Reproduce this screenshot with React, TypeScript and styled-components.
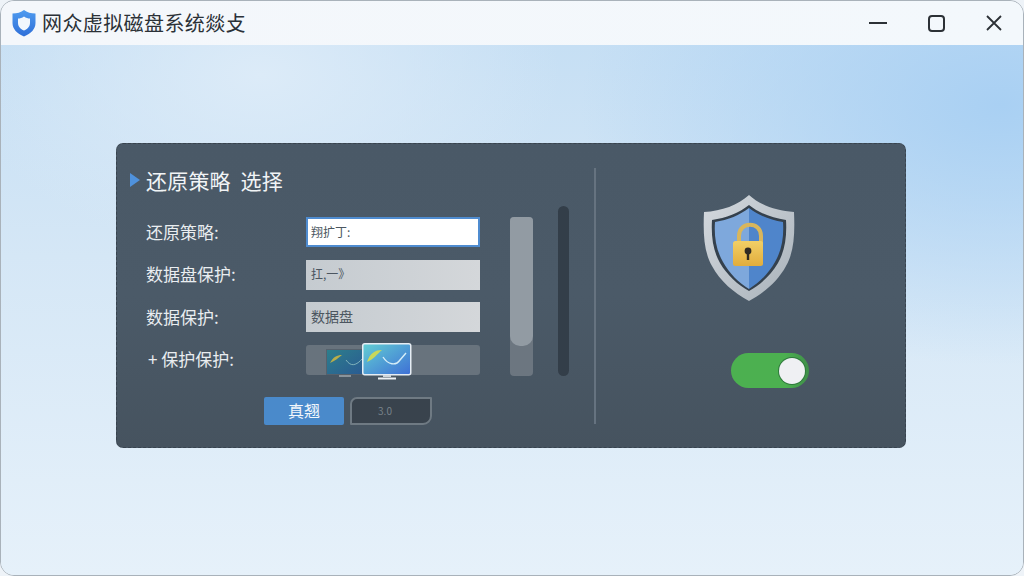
import React from 'react'
import styled, { createGlobalStyle } from 'styled-components'

const fontStack = `"Noto Sans CJK SC", "Noto Sans", sans-serif`

const GlobalStyle = createGlobalStyle`
    html, body {
        margin: 0;
        padding: 0;
        background: #eef3f8;
        font-family: ${fontStack};
    }
`

const Window = styled.div`
    width: 1024px;
    height: 576px;
    display: flex;
    flex-direction: column;
    box-sizing: border-box;
    border: 1px solid #a9b2ba;
    border-radius: 14px;
    overflow: hidden;
`

const TitleBar = styled.header`
    height: 44px;
    flex: none;
    display: flex;
    align-items: center;
    padding-left: 10px;
    background: linear-gradient(90deg, #f4f7fb, #f3f8fc);
`

const AppTitle = styled.h1`
    margin: 0 0 2px 5px;
    font-size: 20px;
    font-weight: 400;
    letter-spacing: 0.4px;
    color: #2b3137;
`

const WindowControls = styled.div`
    margin-left: auto;
    display: flex;
    align-items: center;
`

const ControlButton = styled.div`
    width: 58px;
    height: 44px;
    display: flex;
    align-items: center;
    justify-content: center;
    color: #2c3136;
`

const Desktop = styled.main`
    flex: 1;
    padding: 98px 117px 0 115px;
    background:
        radial-gradient(ellipse 420px 260px at 1000px 60px, #a9d0f3 0%, rgba(169, 208, 243, 0) 100%),
        radial-gradient(ellipse 300px 180px at 260px 30px, #dcebf8 0%, rgba(220, 235, 248, 0) 100%),
        linear-gradient(180deg, #c6dff4 0%, #d5e7f6 40%, #e6f1fa 100%);
`

const Panel = styled.section`
    height: 305px;
    box-sizing: border-box;
    display: flex;
    padding: 24px 0 23px;
    border: 1px dashed #38434e;
    border-radius: 7px;
    background: linear-gradient(180deg, #4a5967 0%, #4b5a68 50%, #46535f 100%);
`

const LeftPane = styled.div`
    width: 479px;
    flex: none;
    box-sizing: border-box;
    padding-left: 13px;
    border-right: 2px solid #667380;
`

const PaneHeading = styled.h2`
    margin: 0;
    height: 24px;
    box-sizing: border-box;
    padding-bottom: 1px;
    display: flex;
    align-items: center;
    font-size: 21px;
    line-height: 22px;
    font-weight: 400;
    letter-spacing: 0.2px;
    color: #f1f4f6;
    white-space: pre;
`

const HeadingMarker = styled.span`
    width: 0;
    height: 0;
    margin-right: 6px;
    border-left: 10px solid #4f92dd;
    border-top: 7px solid transparent;
    border-bottom: 7px solid transparent;
`

const PaneBody = styled.div`
    display: flex;
    margin: 14px 0 0 16px;
`

const Form = styled.div`
    width: 334px;
    flex: none;
    padding-top: 11px;
`

const FormRow = styled.div`
    height: 30px;
    margin-bottom: 12.5px;
    display: grid;
    grid-template-columns: 160px 174px;
    align-items: center;
`

const Label = styled.label<{ $indent?: boolean }>`
    font-size: 17px;
    font-weight: 400;
    line-height: 24px;
    color: #e9edf0;
    padding: 0 0 1px ${(props) => (props.$indent ? '2px' : '0')};
    white-space: pre;
`

const Field = styled.div<{ $focused?: boolean; $small?: boolean }>`
    height: 30px;
    box-sizing: border-box;
    display: flex;
    align-items: center;
    padding: 0 0 2px ${(props) => (props.$focused ? '3px' : '5px')};
    font-size: ${(props) => (props.$small ? '12px' : '14px')};
    color: #4c5660;
    background: ${(props) => (props.$focused ? '#ffffff' : 'linear-gradient(90deg, #c5cbd0, #d4d7da)')};
    border: ${(props) => (props.$focused ? '2px solid #4f8cd0' : 'none')};
`

const PreviewField = styled.div`
    position: relative;
    height: 30px;
    border-radius: 3px;
    background: #68737d;
`

const MonitorDim = styled.svg`
    position: absolute;
    left: 20px;
    top: 4px;
`

const MonitorLit = styled.svg`
    position: absolute;
    left: 56px;
    top: -2px;
`

const Actions = styled.div`
    display: flex;
    gap: 6px;
    margin: 22px 0 0 118px;
`

const PrimaryButton = styled.button`
    width: 80px;
    height: 28px;
    padding: 0 0 2px;
    border: none;
    border-radius: 2px;
    background: #4a8acb;
    color: #f3f7fb;
    font-family: ${fontStack};
    font-size: 16px;
`

const GhostButton = styled.button`
    width: 82px;
    height: 28px;
    padding: 0 12px 0 0;
    box-sizing: border-box;
    border: 2px solid #6f7a83;
    border-radius: 7px 1px 9px 1px;
    background: #39434d;
    color: #78828a;
    font-family: ${fontStack};
    font-size: 10px;
`

const ScrollTrack = styled.div`
    width: 23px;
    height: 159px;
    flex: none;
    margin: 11px 0 0 30px;
    border-radius: 4px;
    background: #6c7680;
`

const ScrollThumb = styled.div`
    height: 129px;
    border-radius: 4px 4px 10px 10px;
    background: #929ba3;
`

const DarkRail = styled.div`
    width: 11px;
    height: 170px;
    flex: none;
    margin-left: 25px;
    border-radius: 6px;
    background: #333e49;
`

const RightPane = styled.div`
    flex: 1;
    display: flex;
    flex-direction: column;
    padding: 26px 0 0 106px;
`

const ShieldArt = styled.svg`
    display: block;
`

const Toggle = styled.div`
    width: 78px;
    height: 35px;
    margin: 51px 0 0 29px;
    box-sizing: border-box;
    display: flex;
    align-items: center;
    justify-content: flex-end;
    padding-right: 4px;
    border-radius: 17.5px;
    background: linear-gradient(90deg, #4cb050 0%, #4cb050 70%, #3f8f49 100%);
`

const ToggleKnob = styled.span`
    width: 26px;
    height: 26px;
    border-radius: 50%;
    background: #eff0f3;
    box-shadow: 0 0 0 1px #2f7a3c;
`

const Logo = () => (
    <svg width="26" height="28" viewBox="0 0 26 28">
        <defs>
            <linearGradient id="logoFill" x1="0" y1="0" x2="0" y2="1">
                <stop offset="0" stopColor="#4f9bef" />
                <stop offset="1" stopColor="#2f6fd8" />
            </linearGradient>
        </defs>
        <path d="M13 1 C16 3.5 20 4.5 24.5 4.5 L24.5 14 C24.5 20 20 24.5 13 27.5 C6 24.5 1.5 20 1.5 14 L1.5 4.5 C6 4.5 10 3.5 13 1 Z" fill="url(#logoFill)" />
        <path d="M13 7.5 C15 9 17 9.5 19 9.5 L19 14 C19 17.5 16.5 20 13 21.5 C9.5 20 7 17.5 7 14 L7 9.5 C9 9.5 11 9 13 7.5 Z" fill="#f2f7fd" />
    </svg>
)

const Shield = () => (
    <ShieldArt width="94" height="108" viewBox="0 0 94 108">
        <defs>
            <linearGradient id="rim" x1="0" y1="0" x2="1" y2="1">
                <stop offset="0" stopColor="#d4d9de" />
                <stop offset="1" stopColor="#a9b2ba" />
            </linearGradient>
            <linearGradient id="lockBody" x1="0" y1="0" x2="0" y2="1">
                <stop offset="0" stopColor="#f1cf66" />
                <stop offset="1" stopColor="#e2ad3d" />
            </linearGradient>
        </defs>
        <path d="M47 1 C58 11 74 17 92 18 C93 40 92 58 84 72 C76 87 62 99 47 107 C32 99 18 87 10 72 C2 58 1 40 2 18 C20 17 36 11 47 1 Z" fill="url(#rim)" />
        <path d="M47 11 C57 19 70 24 84 26 C85 42 83 57 76 69 C69 81 58 91 47 97 C36 91 25 81 18 69 C11 57 9 42 10 26 C24 24 37 19 47 11 Z" fill="#35414d" />
        <path d="M47 14 L47 95 C37 89 27 79 21 68 C14 56 12 42 13 28 C26 26 38 21 47 14 Z" fill="#7ea8dc" />
        <path d="M47 14 C56 21 68 26 81 28 C82 42 80 56 73 68 C67 79 57 89 47 95 Z" fill="#4f85cb" />
        <path d="M37 49 L37 42 C37 27 59 27 59 42 L59 49" fill="none" stroke="#d9b65c" strokeWidth="4" />
        <rect x="31" y="47" width="30" height="25" rx="2.5" fill="url(#lockBody)" />
        <circle cx="46" cy="57" r="3.4" fill="#2f2a22" />
        <rect x="44.8" y="58" width="2.4" height="8" fill="#2f2a22" />
    </ShieldArt>
)

const Monitors = () => (
    <>
        <MonitorDim width="38" height="30" viewBox="0 0 38 30">
            <defs>
                <linearGradient id="screenDim" x1="0" y1="0" x2="1" y2="1">
                    <stop offset="0" stopColor="#2d7f8c" />
                    <stop offset="1" stopColor="#2a5a92" />
                </linearGradient>
            </defs>
            <rect x="0.5" y="0.5" width="37" height="25" fill="url(#screenDim)" stroke="#56616c" />
            <path d="M4 14 C7 8 11 6 16 6 C12 9 9 12 4 14 Z" fill="#b8ae4a" />
            <path d="M20 11 C25 18 30 17 37 9" fill="none" stroke="#7fb2bb" strokeWidth="1" />
            <rect x="13" y="26" width="12" height="2" fill="#8a939b" />
        </MonitorDim>
        <MonitorLit width="50" height="37" viewBox="0 0 50 37">
            <defs>
                <linearGradient id="screenLit" x1="0" y1="0" x2="1" y2="1">
                    <stop offset="0" stopColor="#62cfd3" />
                    <stop offset="1" stopColor="#3e6fd6" />
                </linearGradient>
            </defs>
            <rect x="0.75" y="0.75" width="48" height="31" rx="2" fill="url(#screenLit)" stroke="#e6edf4" strokeWidth="1.5" />
            <path d="M5 19 C8 10 13 7 20 7 C15 11 12 16 5 19 Z" fill="#c8d85a" />
            <path d="M21 14 C26 22 34 23 38 17 L44 10" fill="none" stroke="#d6eef8" strokeWidth="1.4" />
            <rect x="21" y="32" width="8" height="2" fill="#cfd6dc" />
            <rect x="16" y="34.5" width="18" height="2" fill="#eef2f5" />
        </MonitorLit>
    </>
)

export default function App() {
    return (
        <>
            <GlobalStyle />
            <Window>
                <TitleBar>
                    <Logo />
                    <AppTitle>网众虚拟磁盘系统燚攴</AppTitle>
                    <WindowControls>
                        <ControlButton>
                            <svg width="18" height="2" viewBox="0 0 18 2">
                                <path d="M0 1 H18" stroke="currentColor" strokeWidth="2" />
                            </svg>
                        </ControlButton>
                        <ControlButton>
                            <svg width="17" height="17" viewBox="0 0 17 17">
                                <rect x="1" y="1" width="15" height="15" rx="3" fill="none" stroke="currentColor" strokeWidth="2" />
                            </svg>
                        </ControlButton>
                        <ControlButton>
                            <svg width="16" height="16" viewBox="0 0 16 16">
                                <path d="M1 1 L15 15 M15 1 L1 15" stroke="currentColor" strokeWidth="1.8" />
                            </svg>
                        </ControlButton>
                    </WindowControls>
                </TitleBar>
                <Desktop>
                    <Panel>
                        <LeftPane>
                            <PaneHeading>
                                <HeadingMarker />
                                还原策略  选择
                            </PaneHeading>
                            <PaneBody>
                                <Form>
                                    <FormRow>
                                        <Label>还原策略:</Label>
                                        <Field $focused $small>翔扩丁:</Field>
                                    </FormRow>
                                    <FormRow>
                                        <Label>数据盘保护:</Label>
                                        <Field $small>扛,一》</Field>
                                    </FormRow>
                                    <FormRow>
                                        <Label>数据保护:</Label>
                                        <Field>数据盘</Field>
                                    </FormRow>
                                    <FormRow>
                                        <Label $indent>+ 保护保护:</Label>
                                        <PreviewField>
                                            <Monitors />
                                        </PreviewField>
                                    </FormRow>
                                    <Actions>
                                        <PrimaryButton>真翘</PrimaryButton>
                                        <GhostButton>3.0</GhostButton>
                                    </Actions>
                                </Form>
                                <ScrollTrack>
                                    <ScrollThumb />
                                </ScrollTrack>
                                <DarkRail />
                            </PaneBody>
                        </LeftPane>
                        <RightPane>
                            <Shield />
                            <Toggle>
                                <ToggleKnob />
                            </Toggle>
                        </RightPane>
                    </Panel>
                </Desktop>
            </Window>
        </>
    )
}
